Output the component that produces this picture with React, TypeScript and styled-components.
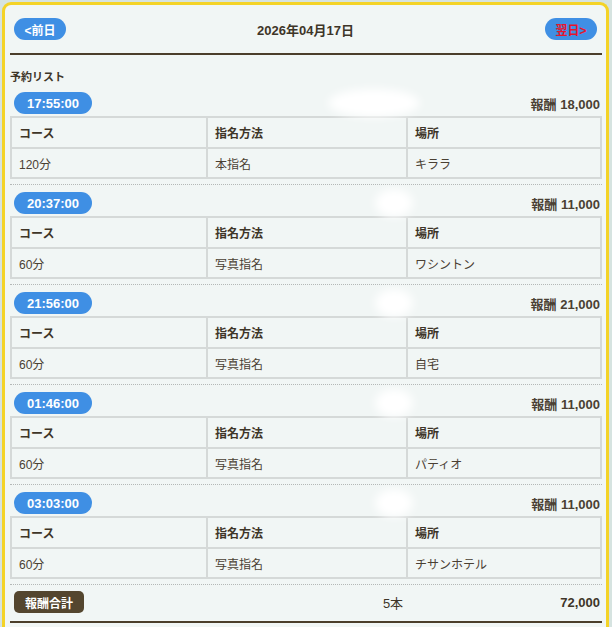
import React from 'react'
import styled, { createGlobalStyle } from 'styled-components'

const GlobalStyle = createGlobalStyle`
body {
  margin: 0;
  background: #d6e3e0;
  font-family: "Liberation Sans", "Noto Sans CJK JP", sans-serif;
  color: #3e3528;
}
`

const Frame = styled.div`
margin: 2px 3px 0 2px;
height: 640px;
border: 3px solid #f4d327;
border-bottom: none;
border-radius: 9px 9px 0 0;
background: #f1f6f5;
padding: 13px 4px 0 5px;
box-sizing: border-box;
overflow: hidden;
`

const Header = styled.div`
display: flex;
align-items: center;
justify-content: space-between;
padding: 0 5px 0 4px;
height: 22px;
`

const NavButton = styled.div<{ $next?: boolean }>`
width: 52px;
height: 22px;
border-radius: 11px;
background: #3f8fe4;
color: ${p => (p.$next ? '#e8142b' : '#fff')};
font-size: 12px;
font-weight: bold;
display: flex;
align-items: center;
justify-content: center;
`

const DateText = styled.div`
font-size: 13px;
font-weight: bold;
color: #3e3528;
`

const Rule = styled.div`
height: 2px;
background: #4b3e2b;
margin-top: 13px;
`

const Title = styled.div`
font-size: 11px;
font-weight: bold;
margin-top: 14px;
height: 16px;
line-height: 16px;
`

const Block = styled.div`
padding-top: 7px;
padding-bottom: 5px;
border-bottom: 1px dotted #b4b8b7;
`

const BlockHead = styled.div`
display: flex;
align-items: center;
height: 22px;
margin-bottom: 2px;
`

const TimePill = styled.div<{ $dark?: boolean }>`
margin-left: 4px;
padding: 0 ${p => (p.$dark ? '11px' : '13px')};
height: 22px;
border-radius: ${p => (p.$dark ? '5px' : '11px')};
background: ${p => (p.$dark ? '#54462f' : '#3f8fe4')};
color: #fff;
font-size: ${p => (p.$dark ? '12px' : '13px')};
font-weight: bold;
display: inline-flex;
align-items: center;
`

const Blur = styled.span<{ $w: number; $left: number }>`
width: ${p => p.$w}px;
height: 28px;
margin-left: ${p => p.$left}px;
border-radius: 50%;
background: #ffffff;
filter: blur(5px);
`

const Reward = styled.div`
margin-left: auto;
padding-right: 2px;
font-size: 13px;
font-weight: bold;
color: #4a4033;
`

const Table = styled.table`
width: 100%;
border-collapse: collapse;
table-layout: fixed;
font-size: 12px;
`

const Col = styled.col<{ $w?: number }>`
width: ${p => (p.$w ? `${p.$w}px` : 'auto')};
`

const Cell = styled.td<{ $head?: boolean }>`
border: 2px solid #d5d9d8;
height: ${p => (p.$head ? '29px' : '28px')};
padding: 0 7px;
font-weight: ${p => (p.$head ? 'bold' : 'normal')};
color: ${p => (p.$head ? '#3e3528' : '#4a4033')};
`

const Summary = styled.div`
display: grid;
grid-template-columns: 1fr 60px 179px;
align-items: center;
padding-top: 6px;
height: 22px;
font-size: 13px;
`

const Count = styled.div`
text-align: center;
`

const Total = styled.div`
text-align: right;
padding-right: 2px;
font-weight: bold;
`

const BottomRule = styled(Rule)`
margin-top: 8px;
`

interface Reservation {
  time: string
  reward: string
  course: string
  method: string
  place: string
}

const reservations: Reservation[] = [
  { time: '17:55:00', reward: '18,000', course: '120分', method: '本指名', place: 'キララ' },
  { time: '20:37:00', reward: '11,000', course: '60分', method: '写真指名', place: 'ワシントン' },
  { time: '21:56:00', reward: '21,000', course: '60分', method: '写真指名', place: '自宅' },
  { time: '01:46:00', reward: '11,000', course: '60分', method: '写真指名', place: 'パティオ' },
  { time: '03:03:00', reward: '11,000', course: '60分', method: '写真指名', place: 'チサンホテル' },
]

export default function App() {
  return (
    <>
      <GlobalStyle />
      <Frame>
        <Header>
          <NavButton>&lt;前日</NavButton>
          <DateText>2026年04月17日</DateText>
          <NavButton $next>翌日&gt;</NavButton>
        </Header>
        <Rule />
        <Title>予約リスト</Title>
        {reservations.map((r, i) => (
          <Block key={r.time}>
            <BlockHead>
              <TimePill>{r.time}</TimePill>
              <Blur $w={i === 0 ? 92 : 38} $left={i === 0 ? 236 : 283} />
              <Reward>報酬 {r.reward}</Reward>
            </BlockHead>
            <Table>
              <colgroup>
                <Col $w={196} />
                <Col $w={200} />
                <Col />
              </colgroup>
              <tbody>
                <tr>
                  <Cell $head>コース</Cell>
                  <Cell $head>指名方法</Cell>
                  <Cell $head>場所</Cell>
                </tr>
                <tr>
                  <Cell>{r.course}</Cell>
                  <Cell>{r.method}</Cell>
                  <Cell>{r.place}</Cell>
                </tr>
              </tbody>
            </Table>
          </Block>
        ))}
        <Summary>
          <div>
            <TimePill $dark>報酬合計</TimePill>
          </div>
          <Count>5本</Count>
          <Total>72,000</Total>
        </Summary>
        <BottomRule />
      </Frame>
    </>
  )
}
